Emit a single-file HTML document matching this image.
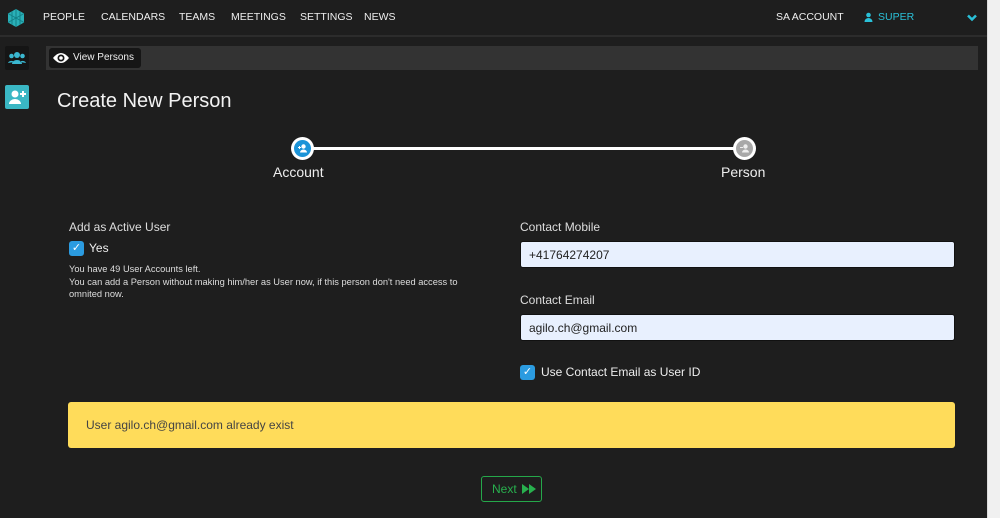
<!DOCTYPE html>
<html><head><style>
*{box-sizing:border-box;margin:0;padding:0}
body{width:1000px;height:518px;background:#1e1e1e;font-family:"Liberation Sans",sans-serif;color:#eee;position:relative;overflow:hidden}
.abs{position:absolute}
.nav{left:0;top:0;width:987px;height:37px;background:#1e1e1e;border-bottom:2px solid #2c2c2c}
.nav span{position:absolute;top:11px;font-size:10.5px;color:#eee;white-space:nowrap}
.sb{left:987px;top:0;width:13px;height:518px;background:#f0f0f0;border-left:1px solid #ddd}
.input{background:#e8f0fe;border-radius:3px;height:27px;color:#222;font-size:12px;padding:6px 8px;border:1px solid #111}
.cb{width:15px;height:15px;background:#2b9be0;border-radius:3px;color:#fff;font-size:11px;line-height:15px;text-align:center}
</style></head><body>
<div class="abs nav">
<svg class="abs" style="left:6px;top:8px" width="20" height="20" viewBox="0 0 20 20"><polygon points="10,1 18,5.5 18,14.5 10,19 2,14.5 2,5.5" fill="#2ab0b8"/><path d="M10 1V19M2 5.5L18 14.5M18 5.5L2 14.5M6 3.2V16.8M14 3.2V16.8" stroke="#137f86" stroke-width="1"/></svg>
<span style="left:43px">PEOPLE</span><span style="left:101px">CALENDARS</span><span style="left:179px">TEAMS</span><span style="left:231px">MEETINGS</span><span style="left:300px">SETTINGS</span><span style="left:364px">NEWS</span>
<span style="left:776px">SA ACCOUNT</span>
<svg class="abs" style="left:864px;top:12px" width="9" height="10" viewBox="0 0 9 10"><circle cx="4.5" cy="3" r="2.3" fill="#2ac0d8"/><path d="M0.5 10a4 4 0 0 1 8 0z" fill="#2ac0d8"/></svg>
<span style="left:878px;color:#2ac0d8">SUPER</span>
<svg class="abs" style="left:967px;top:14px" width="10" height="8" viewBox="0 0 10 8"><path d="M1 1.5L5 5.5L9 1.5" stroke="#2ac0d8" stroke-width="2.5" fill="none"/></svg>
</div>
<div class="abs" style="left:5px;top:46px;width:24px;height:24px;background:#151515;border-radius:2px"><svg width="24" height="24"><circle cx="12" cy="9" r="3" fill="#3ab7d0"/><circle cx="6.5" cy="10" r="2.3" fill="#3ab7d0"/><circle cx="17.5" cy="10" r="2.3" fill="#3ab7d0"/><path d="M7 18a5 4 0 0 1 10 0z M3 17a3.5 3 0 0 1 6 -1z M21 17a3.5 3 0 0 0 -6 -1z" fill="#3ab7d0"/></svg></div>
<div class="abs" style="left:5px;top:85px;width:24px;height:24px;background:#3ab7c4;border-radius:2px"><svg width="24" height="24"><circle cx="10" cy="9" r="3.5" fill="#fff"/><path d="M4 19a6 5 0 0 1 12 0z" fill="#fff"/><path d="M18 6v6M15 9h6" stroke="#fff" stroke-width="2"/></svg></div>
<div class="abs" style="left:46px;top:46px;width:932px;height:24px;background:#333"></div>
<div class="abs" style="left:49px;top:48px;width:92px;height:20px;background:#161616;border-radius:3px;font-size:10px;color:#eee;padding:4px 0 0 24px;white-space:nowrap">View Persons
<svg class="abs" style="left:3px;top:3px" width="18" height="14" viewBox="0 0 18 14"><path d="M1 7Q9 -3 17 7Q9 17 1 7z" fill="#fff"/><circle cx="9" cy="7" r="3.5" fill="#161616"/><circle cx="9" cy="7" r="1.8" fill="#fff"/></svg></div>
<div class="abs" style="left:57px;top:90px;font-size:20px;color:#f2f2f2">Create New Person</div>
<div class="abs" style="left:302px;top:147px;width:442px;height:3px;background:#fff"></div>
<div class="abs" style="left:291px;top:137px;width:23px;height:23px;border-radius:50%;background:#fff"></div>
<div class="abs" style="left:294px;top:140px;width:17px;height:17px;border-radius:50%;background:#1c94d8"></div>
<svg class="abs" style="left:294px;top:140px" width="17" height="17" viewBox="0 0 17 17"><circle cx="9.5" cy="6.5" r="2.2" fill="#fff"/><path d="M6 12.5a3.5 3 0 0 1 7 0z" fill="#fff"/><path d="M4 7.5h3M5.5 6v3" stroke="#fff" stroke-width="1"/></svg>
<div class="abs" style="left:733px;top:137px;width:23px;height:23px;border-radius:50%;background:#fff"></div>
<div class="abs" style="left:736px;top:140px;width:17px;height:17px;border-radius:50%;background:#a8a8a8"></div>
<svg class="abs" style="left:736px;top:140px" width="17" height="17" viewBox="0 0 17 17"><circle cx="9.5" cy="6.5" r="2.2" fill="#eee"/><path d="M6 12.5a3.5 3 0 0 1 7 0z" fill="#eee"/><path d="M4 7.5h3" stroke="#eee" stroke-width="1"/></svg>
<div class="abs" style="left:273px;top:164px;font-size:14px">Account</div>
<div class="abs" style="left:721px;top:164px;font-size:14px">Person</div>
<div class="abs" style="left:69px;top:220px;font-size:12px;color:#ddd">Add as Active User</div>
<div class="abs cb" style="left:69px;top:241px">&#10003;</div>
<div class="abs" style="left:89px;top:241px;font-size:12px">Yes</div>
<div class="abs" style="left:69px;top:263px;font-size:9.3px;line-height:12.5px;color:#ddd;width:415px">You have 49 User Accounts left.<br>You can add a Person without making him/her as User now, if this person don't need access to omnited now.</div>
<div class="abs" style="left:520px;top:220px;font-size:12px;color:#ddd">Contact Mobile</div>
<div class="abs input" style="left:520px;top:241px;width:435px">+41764274207</div>
<div class="abs" style="left:520px;top:293px;font-size:12px;color:#ddd">Contact Email</div>
<div class="abs input" style="left:520px;top:314px;width:435px">agilo.ch@gmail.com</div>
<div class="abs cb" style="left:520px;top:365px">&#10003;</div>
<div class="abs" style="left:541px;top:365px;font-size:12px">Use Contact Email as User ID</div>
<div class="abs" style="left:68px;top:402px;width:887px;height:46px;background:#ffdc5a;border-radius:3px;color:#444;font-size:12px;padding:16px 18px">User agilo.ch@gmail.com already exist</div>
<div class="abs" style="left:481px;top:476px;width:61px;height:26px;border:1.5px solid #25a84a;border-radius:3px;color:#28b04e;font-size:12px;padding:5px 0 0 10px;white-space:nowrap">Next
<svg class="abs" style="left:40px;top:7px" width="14" height="10" viewBox="0 0 14 10"><path d="M0 0L7 5L0 10zM7 0L14 5L7 10z" fill="#28b04e"/></svg></div>
<div class="abs sb"></div>
</body></html>
